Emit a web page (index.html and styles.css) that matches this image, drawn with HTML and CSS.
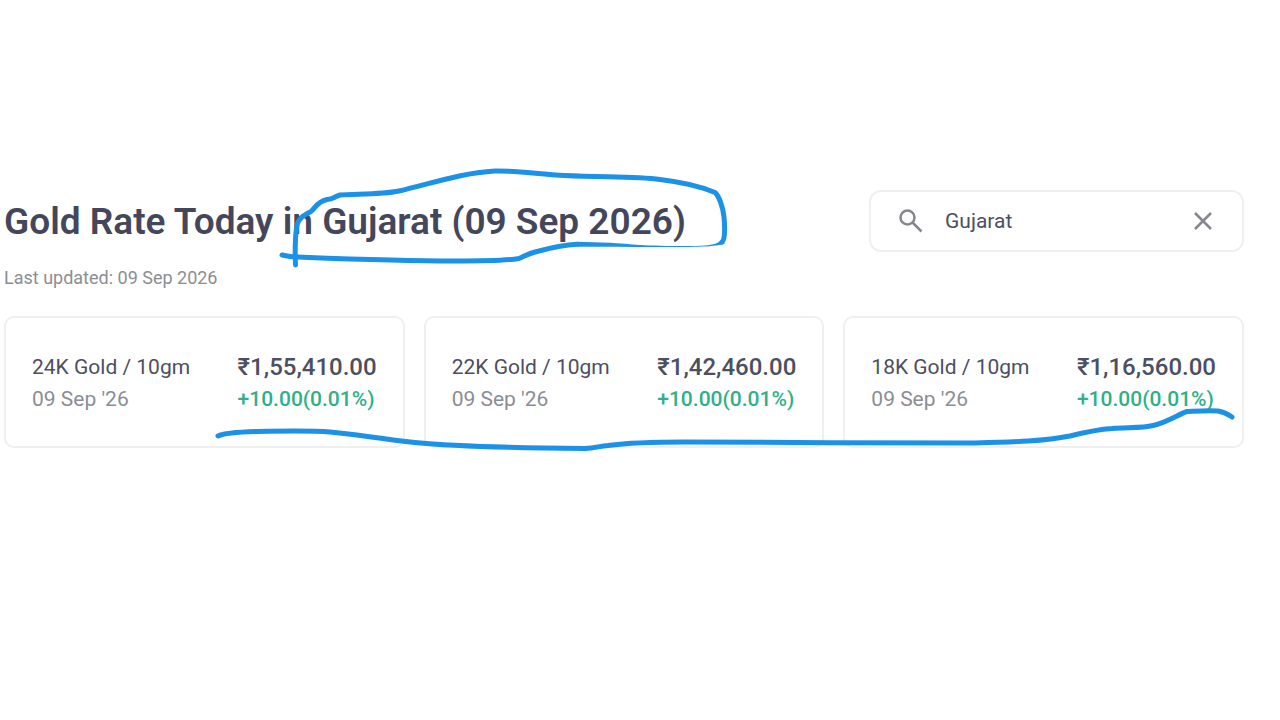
FILE: index.html
```html
<!DOCTYPE html>
<html lang="en">
<head>
    <meta charset="UTF-8">
    <meta name="viewport" content="width=device-width, initial-scale=1.0">
    <title>Gold Rate Today in Gujarat</title>
    <link rel="stylesheet" href="styles.css">
</head>
<body>
    <main class="gold-rates">
        <header class="rates-header">
            <h1>Gold Rate Today in Gujarat (09 Sep 2026)</h1>
            <div class="search-box">
                <svg class="search-icon" viewBox="0 0 24 24" aria-hidden="true">
                    <circle cx="8.500" cy="8.500" r="7"/>
                    <path d="M13.500 13.500l9 9"/>
                </svg>
                <input type="text" value="Gujarat" aria-label="Search state">
                <button type="button" class="clear-btn" aria-label="Clear">
                    <svg viewBox="0 0 18 18" aria-hidden="true">
                        <path d="M1 1l16 16M17 1L1 17"/>
                    </svg>
                </button>
            </div>
        </header>
        <p class="last-updated">Last updated: 09 Sep 2026</p>

        <section class="rate-cards">
            <article class="rate-card">
                <div class="rate-info">
                    <p class="rate-name">24K Gold / 10gm</p>
                    <p class="rate-date">09 Sep '26</p>
                </div>
                <div class="rate-value">
                    <p class="rate-price">₹1,55,410.00</p>
                    <p class="rate-change">+10.00(0.01%)</p>
                </div>
            </article>
            <article class="rate-card">
                <div class="rate-info">
                    <p class="rate-name">22K Gold / 10gm</p>
                    <p class="rate-date">09 Sep '26</p>
                </div>
                <div class="rate-value">
                    <p class="rate-price">₹1,42,460.00</p>
                    <p class="rate-change">+10.00(0.01%)</p>
                </div>
            </article>
            <article class="rate-card">
                <div class="rate-info">
                    <p class="rate-name">18K Gold / 10gm</p>
                    <p class="rate-date">09 Sep '26</p>
                </div>
                <div class="rate-value">
                    <p class="rate-price">₹1,16,560.00</p>
                    <p class="rate-change">+10.00(0.01%)</p>
                </div>
            </article>
        </section>
    </main>

    <!-- pen marks over the rates -->
    <svg class="ink" viewBox="0 0 1280 720" aria-hidden="true">
        <path d="M282 255C286 256 290 257 298 257C350 259 400 261 455 261C485 261 507 260.500 519 258.500C525 256 529 253.500 535 252C550 248 562 245 577 244.300"/>
        <path class="ink-fill" d="M577 241.800C600 242 620 243.500 640 245C660 246 690 246.500 705 245.500C713 245 719 243 721 240L725 243.500C718 247 690 247 670 247C640 247 605 246.500 577 246.800Z"/>
        <path d="M722 242C725 240 725 228 724 217C723 207 719 196 715 192.500C702 187 681 182 660 179.500C635 176 605 177.500 565 175.500C538 174 515 170.500 495 171C460 173 430 184 399 191C380 195 353 193.500 340 195C333 197 334 199 327 199.500C317 202 316 207 311 211.500C304 215 297 219 296.500 228C295 239 295 252 295.500 265"/>
        <path d="M218 436C224 433 240 432 258 431.500C282 431 311 430.500 330 432C355 434 380 439 415 442.500C455 446.500 530 448 585 448.500C595 448 600 446 608 445.500C627 443 650 442 685 442C780 442 880 443.500 975 443C1015 442 1045 441 1070 436C1086 432 1096 429.500 1112 428.500C1125 427 1142 428.500 1153 425.500C1168 422 1179 414 1187 411.500C1197 411 1210 410 1218 411C1225 412 1229 415 1232 417"/>
    </svg>
</body>
</html>
```

FILE: styles.css
```css
* {
    box-sizing: border-box;
}

body {
    margin: 0;
    background-color: #fff;
    color: #4c4f62;
    font-family: Roboto, sans-serif;
    position: relative;
}

h1, p {
    margin: 0;
}

.gold-rates {
    padding: 190px 36px 40px 4px;
}

.rates-header {
    display: flex;
    align-items: center;
    justify-content: space-between;
}
.rates-header h1 {
    padding-top: 2px;
    color: #44475b;
    font-size: 37px;
    line-height: 44px;
    font-weight: 600;
}

.search-box {
    display: flex;
    align-items: center;
    width: 375px;
    height: 62px;
    padding: 0 30px 0 28px;
    border: 2px solid #f0f0f1;
    border-radius: 12px;
}
.search-box input {
    flex: 1;
    min-width: 0;
    margin-left: 22px;
    padding: 0;
    border: none;
    outline: none;
    background: none;
    color: #4c4f62;
    font-family: inherit;
    font-size: 21px;
}
.search-box svg {
    display: block;
    fill: none;
    stroke: #85868f;
    stroke-width: 2.5;
}
.search-icon {
    width: 24px;
    height: 24px;
}
.clear-btn {
    padding: 0;
    border: none;
    background: none;
    cursor: pointer;
}
.clear-btn svg {
    width: 18px;
    height: 18px;
}

.last-updated {
    margin-top: 14px;
    color: #8c8d94;
    font-size: 18px;
    line-height: 24px;
}

.rate-cards {
    display: grid;
    grid-template-columns: repeat(3, 1fr);
    gap: 19px;
    margin-top: 26px;
}
.rate-card {
    display: flex;
    justify-content: space-between;
    padding: 33px 26px 31px;
    border: 2px solid #f0f0f1;
    border-radius: 10px;
}
.rate-name,
.rate-date {
    font-size: 21px;
    line-height: 32px;
}
.rate-date {
    color: #8c8d94;
}
.rate-price {
    font-size: 24px;
    line-height: 32px;
    font-weight: 500;
}
.rate-change {
    color: #2fb088;
    font-size: 21px;
    line-height: 32px;
    font-weight: 500;
}

.ink {
    position: absolute;
    top: 0;
    left: 0;
    width: 100%;
    pointer-events: none;
    fill: none;
    stroke: #1c91e8;
    stroke-width: 5;
    stroke-linecap: round;
    stroke-linejoin: round;
}
.ink-fill {
    fill: #1c91e8;
    stroke: none;
}
```
